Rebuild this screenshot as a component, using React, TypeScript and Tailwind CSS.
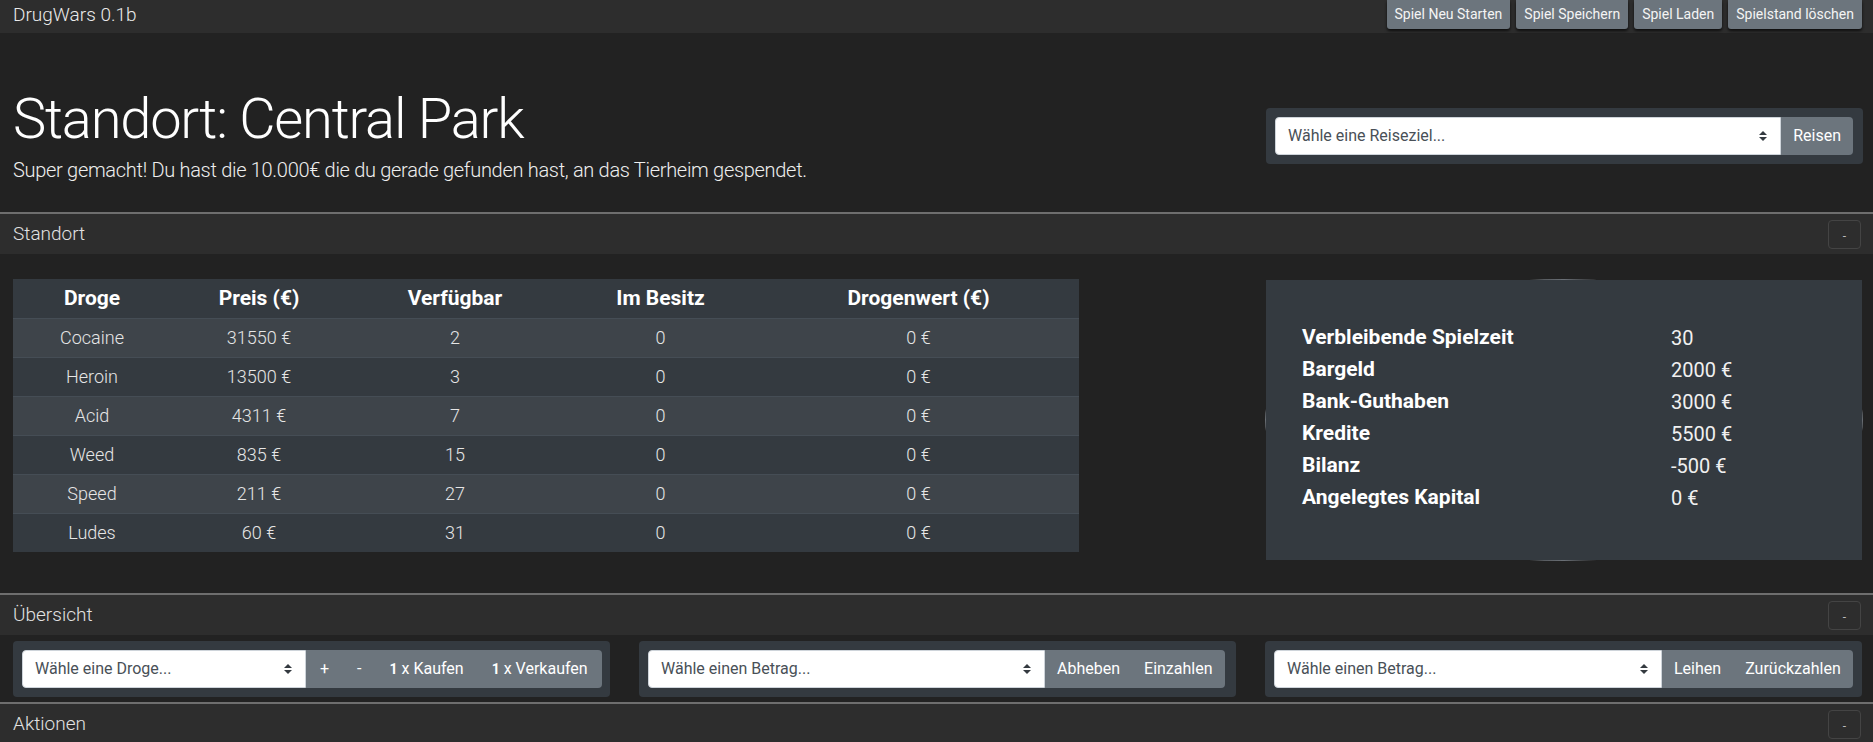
import React from "react";

const drugs = [
  { name: "Cocaine", price: 31550, available: 2 },
  { name: "Heroin", price: 13500, available: 3 },
  { name: "Acid", price: 4311, available: 7 },
  { name: "Weed", price: 835, available: 15 },
  { name: "Speed", price: 211, available: 27 },
  { name: "Ludes", price: 60, available: 31 },
];

const stats = [
  ["Verbleibende Spielzeit", "30"],
  ["Bargeld", "2000 €"],
  ["Bank-Guthaben", "3000 €"],
  ["Kredite", "5500 €"],
  ["Bilanz", "-500 €"],
  ["Angelegtes Kapital", "0 €"],
];

const font = { fontFamily: '"Segoe UI", Roboto, "Noto Sans", sans-serif' };

function SelectArrows() {
  return (
    <svg width="8" height="10" viewBox="0 0 4 5">
      <path d="M2 0L0 2h4zm0 5L0 3h4z" fill="#343a40" />
    </svg>
  );
}

function FakeSelect({ placeholder, width }: { placeholder: string; width: string }) {
  return (
    <div
      className={`flex h-[38px] shrink-0 ${width} items-center justify-between rounded-l-[4px] border border-[#ced4da] bg-white pl-[12px] pr-[13px] text-[16px] text-[#495057]`}
    >
      <span>{placeholder}</span>
      <SelectArrows />
    </div>
  );
}

function GroupButton({ children, wide }: { children: React.ReactNode; wide?: boolean }) {
  return (
    <button
      className={`flex h-[38px] items-center whitespace-pre bg-[#6c757d] text-[16px] text-white last:rounded-r-[4px] ${
        wide ? "px-[14px]" : "px-[12px]"
      }`}
    >
      {children}
    </button>
  );
}

function SectionHeader({ title }: { title: string }) {
  return (
    <div className="flex h-[42px] items-center justify-between border-t-2 border-[#6e6e6e] bg-[#2d2d2d] pl-[13px] pr-[12px]">
      <span className="text-[19px] font-light text-[#e2e2e2]">{title}</span>
      <button className="flex h-[29px] w-[33px] items-center justify-center rounded-[4px] border border-[#444] pt-[3px] text-[12px] leading-none text-[#bbb]">
        -
      </button>
    </div>
  );
}

export default function App() {
  return (
    <div className="min-h-[742px] bg-[#222222] text-[#e8e8e8]" style={font}>
      {/* navbar */}
      <div className="flex h-[33px] items-start justify-between bg-[#2d2d2d] pl-[13px] pr-[11px]">
        <span className="mt-[1px] text-[19px] font-light leading-[28px] text-[#eaeaea]">DrugWars 0.1b</span>
        <div className="flex gap-[6px]">
          {["Spiel Neu Starten", "Spiel Speichern", "Spiel Laden", "Spielstand löschen"].map((b) => (
            <button
              key={b}
              className="h-[29px] rounded-b-[3px] bg-[#6c757d] px-[8px] text-[14px] text-[#f4f4f4] shadow-[0_2px_3px_rgba(0,0,0,0.7)]"
            >
              {b}
            </button>
          ))}
        </div>
      </div>

      {/* location header */}
      <div className="flex items-center justify-between pl-[13px] pr-[10px] pt-[53px] pb-[27px]">
        <div>
          <h1 className="text-[56px] font-light leading-[67px] tracking-[-1.2px] text-white">
            Standort: Central Park
          </h1>
          <p className="mt-[2px] text-[20px] font-light leading-[30px] tracking-[-0.3px] text-[#eeeeee]">
            Super gemacht! Du hast die 10.000€ die du gerade gefunden hast, an das Tierheim gespendet.
          </p>
        </div>
        <div className="flex w-[597px] rounded-[4px] bg-[#343a40] p-[9px] pr-[10px]">
          <FakeSelect placeholder="Wähle eine Reiseziel..." width="flex-1" />
          <GroupButton>Reisen</GroupButton>
        </div>
      </div>

      <SectionHeader title="Standort" />

      <div className="flex items-start justify-between pl-[13px] pr-[11px] pt-[25px] pb-[33px]">
        <table className="w-[1066px] table-fixed border-collapse bg-[#343a40] text-center text-[18px]">
          <colgroup>
            <col className="w-[158px]" />
            <col className="w-[176px]" />
            <col className="w-[216px]" />
            <col className="w-[195px]" />
            <col className="w-[321px]" />
          </colgroup>
          <thead>
            <tr className="h-[39px] text-[21px] font-bold text-white">
              <th>Droge</th>
              <th>Preis (€)</th>
              <th>Verfügbar</th>
              <th>Im Besitz</th>
              <th>Drogenwert (€)</th>
            </tr>
          </thead>
          <tbody className="font-light text-[#e6e6e6]">
            {drugs.map((d, i) => (
              <tr
                key={d.name}
                className={`h-[39px] border-t border-[#454d55] ${i % 2 === 0 ? "bg-[#3e444a]" : "bg-[#343a40]"}`}
              >
                <td>{d.name}</td>
                <td>{d.price} €</td>
                <td>{d.available}</td>
                <td>0</td>
                <td>0 €</td>
              </tr>
            ))}
          </tbody>
        </table>

        <div className="relative mt-[1px] w-[596px]">
          <div className="absolute inset-[-1px] rounded-[50%] border border-[#6a6f75]" />
          <div className="relative flex h-[280px] flex-col justify-center bg-[#343a40] pl-[36px] pb-[4px]">
            {stats.map(([label, value]) => (
              <div key={label} className="flex h-[32px] items-center">
                <span className="w-[369px] text-[21px] font-bold text-white">{label}</span>
                <span className="text-[20px] text-[#f0f0f0]">{value}</span>
              </div>
            ))}
          </div>
        </div>
      </div>

      <SectionHeader title="Übersicht" />

      <div className="grid grid-cols-3 gap-[29px] pl-[13px] pr-[11px] pt-[6px] pb-[5px]">
        <div className="flex rounded-[4px] bg-[#343a40] p-[9px]">
          <FakeSelect placeholder="Wähle eine Droge..." width="w-[284px]" />
          <GroupButton wide>+</GroupButton>
          <GroupButton wide>-</GroupButton>
          <GroupButton wide>
            <b className="text-[14px]">1</b> x Kaufen
          </GroupButton>
          <GroupButton wide>
            <b className="text-[14px]">1</b> x Verkaufen
          </GroupButton>
        </div>
        <div className="flex rounded-[4px] bg-[#343a40] p-[9px]">
          <FakeSelect placeholder="Wähle einen Betrag..." width="w-[397px]" />
          <GroupButton>Abheben</GroupButton>
          <GroupButton>Einzahlen</GroupButton>
        </div>
        <div className="flex rounded-[4px] bg-[#343a40] p-[9px]">
          <FakeSelect placeholder="Wähle einen Betrag..." width="w-[388px]" />
          <GroupButton>Leihen</GroupButton>
          <GroupButton>Zurückzahlen</GroupButton>
        </div>
      </div>

      <SectionHeader title="Aktionen" />
    </div>
  );
}
